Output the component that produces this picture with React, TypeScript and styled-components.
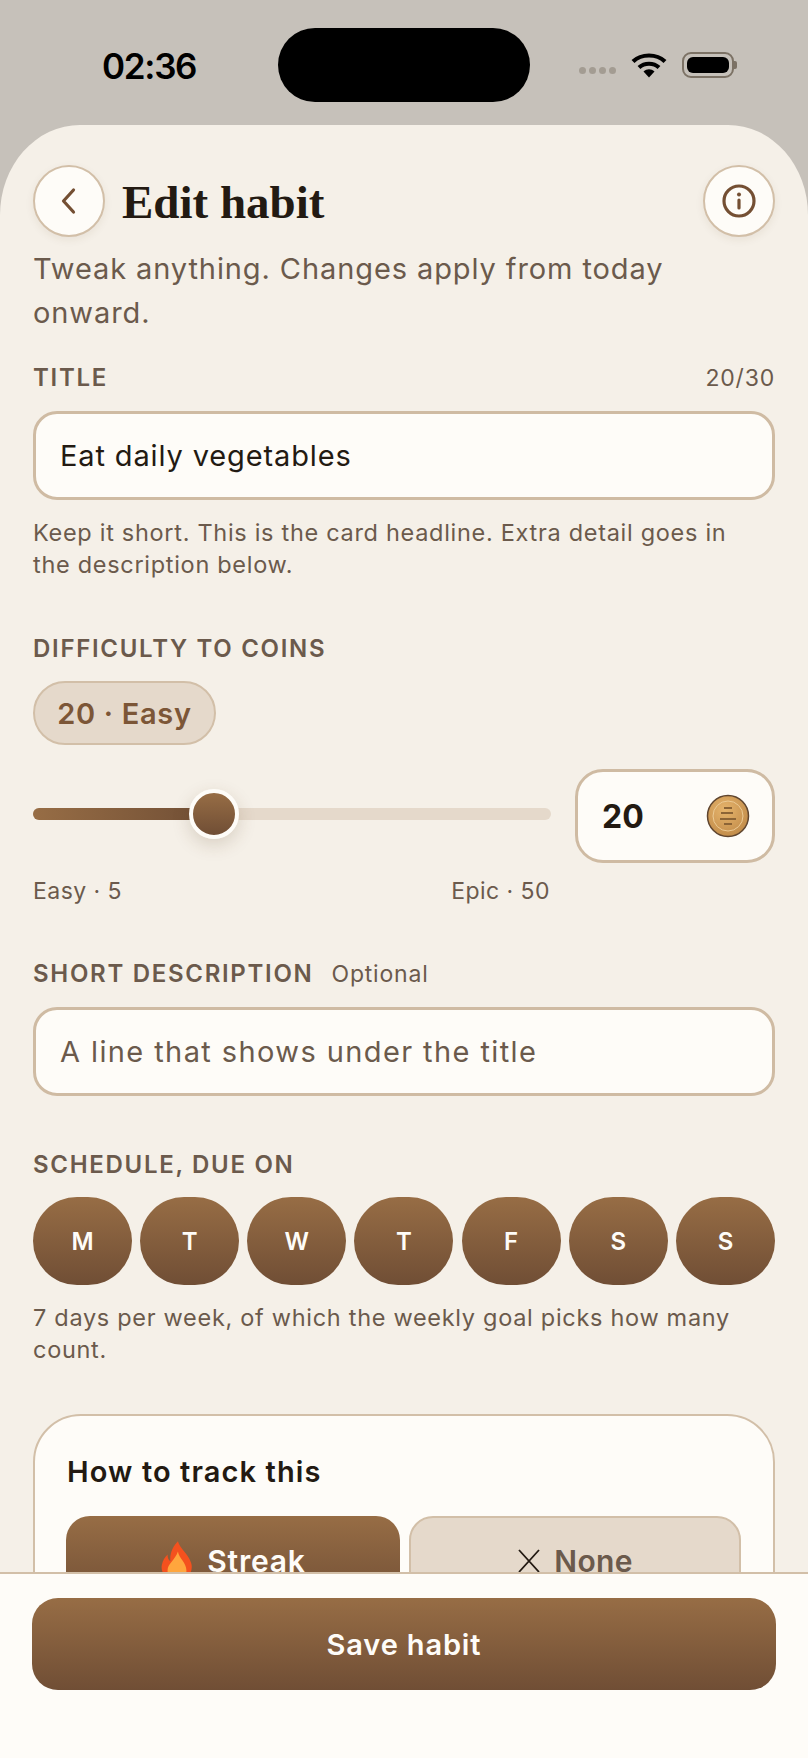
import React from 'react';
import styled, {createGlobalStyle} from 'styled-components';

const days = ['M', 'T', 'W', 'T', 'F', 'S', 'S'];

export default function App() {
    return (
        <>
            <GlobalStyle/>
            <Phone>
                <StatusBar>
                    <Time>02:36</Time>
                    <Island/>
                    <StatusIcons>
                        <SignalDots>
                            <SignalDot/><SignalDot/><SignalDot/><SignalDot/>
                        </SignalDots>
                        <svg width="36" height="26" viewBox="0 0 36 26">
                            <path d="M2 9.5C10.500 1.500 25.500 1.500 34 9.500" fill="none" stroke="#000" strokeWidth="4.200"/>
                            <path d="M8 15.500C13.500 10.500 22.500 10.500 28 15.500" fill="none" stroke="#000" strokeWidth="4.200"/>
                            <path d="M12.500 19.500L18 25.500L23.500 19.500C20 16.500 16 16.500 12.500 19.500Z" fill="#000"/>
                        </svg>
                        <Battery>
                            <BatteryFill/>
                        </Battery>
                        <BatteryCap/>
                    </StatusIcons>
                </StatusBar>

                <Sheet>
                    <Header>
                        <RoundButton>
                            <svg width="24" height="30" viewBox="0 0 24 30" fill="none">
                                <path d="M16.500 4L6.500 15L16.500 26" stroke="#744f33" strokeWidth="3.200" strokeLinecap="round" strokeLinejoin="round"/>
                            </svg>
                        </RoundButton>
                        <Title>Edit habit</Title>
                        <InfoButton>
                            <svg width="36" height="36" viewBox="0 0 36 36" fill="none">
                                <circle cx="18" cy="18" r="15" stroke="#744f33" strokeWidth="3.200"/>
                                <path d="M18 17V25" stroke="#744f33" strokeWidth="3.200" strokeLinecap="round"/>
                                <circle cx="18" cy="11.500" r="2" fill="#744f33"/>
                            </svg>
                        </InfoButton>
                    </Header>

                    <Subtitle>Tweak anything. Changes apply from today onward.</Subtitle>

                    <LabelRow>
                        <Label>TITLE</Label>
                        <Counter>20/30</Counter>
                    </LabelRow>
                    <Field>Eat daily vegetables</Field>
                    <Hint>Keep it short. This is the card headline. Extra detail goes in the description below.</Hint>

                    <SectionLabel>DIFFICULTY TO COINS</SectionLabel>
                    <Pill>20 · Easy</Pill>
                    <SliderRow>
                        <SliderColumn>
                            <Track>
                                <TrackFill/>
                                <Thumb/>
                            </Track>
                        </SliderColumn>
                        <CoinBox>
                            <CoinValue>20</CoinValue>
                            <svg width="44" height="44" viewBox="0 0 44 44">
                                <defs>
                                    <radialGradient id="coin" cx="42%" cy="35%" r="70%">
                                        <stop offset="0%" stopColor="#e6b46c"/>
                                        <stop offset="100%" stopColor="#c08a48"/>
                                    </radialGradient>
                                </defs>
                                <circle cx="22" cy="22" r="20.500" fill="url(#coin)" stroke="#5f452f" strokeWidth="1.500"/>
                                <circle cx="22" cy="22" r="15" fill="none" stroke="#ecca94" strokeWidth="1"/>
                                <path d="M18 14H26M15 19H27M14 25H30M18 30H26" stroke="#8c6436" strokeWidth="1.800"/>
                            </svg>
                        </CoinBox>
                    </SliderRow>
                    <ScaleRow>
                        <span>Easy · 5</span>
                        <span>Epic · 50</span>
                    </ScaleRow>

                    <OptionalRow>
                        <Label>SHORT DESCRIPTION</Label>
                        <Counter>Optional</Counter>
                    </OptionalRow>
                    <Field $placeholder>A line that shows under the title</Field>

                    <SectionLabel $gap={54}>SCHEDULE, DUE ON</SectionLabel>
                    <Days>
                        {days.map((day, i) => <Day key={i}>{day}</Day>)}
                    </Days>
                    <Hint>7 days per week, of which the weekly goal picks how many count.</Hint>

                    <TrackCard>
                        <CardTitle>How to track this</CardTitle>
                        <TrackOptions>
                            <TrackOption $active>
                                <svg width="34" height="44" viewBox="0 0 36 44">
                                    <path d="M19 1C21 9 30 14 33 24C36 34 28 43 18 43C8 43 0 35 2 26C3 21 5 18 8 15C8 19 9 21 11 22C10 14 14 6 19 1Z" fill="#f4511e"/>
                                    <path d="M19 12C20 19 28 24 28 32C28 38 23 43 18 43C12 43 8 38 8 32C8 25 16 21 19 12Z" fill="#ffa63d"/>
                                </svg>
                                Streak
                            </TrackOption>
                            <TrackOption>
                                <svg width="24" height="26" viewBox="0 0 24 26" fill="none">
                                    <path d="M2 2L22 24M22 2L2 24" stroke="#231a12" strokeWidth="1.800"/>
                                </svg>
                                None
                            </TrackOption>
                        </TrackOptions>
                    </TrackCard>
                </Sheet>

                <Footer>
                    <SaveButton>Save habit</SaveButton>
                </Footer>
            </Phone>
        </>
    );
}

const GlobalStyle = createGlobalStyle`
    html, body {
        margin: 0;
        padding: 0;
        background: #c6c1ba;
    }

    * {
        box-sizing: border-box;
    }
`;

const Phone = styled.div`
    width: 808px;
    height: 1758px;
    display: flex;
    flex-direction: column;
    overflow: hidden;
    background: #c6c1ba;
    font-family: Inter, "Liberation Sans", sans-serif;
    color: #231a12;
`;

const StatusBar = styled.div`
    height: 125px;
    flex-shrink: 0;
    display: flex;
    padding: 28px 0 0 102px;
    align-items: flex-start;
`;

const Time = styled.div`
    width: 176px;
    flex-shrink: 0;
    margin-top: 18px;
    font-size: 35px;
    line-height: 40px;
    font-weight: 600;
    letter-spacing: -1.300px;
    color: #000;
`;

const Island = styled.div`
    width: 252px;
    height: 74px;
    flex-shrink: 0;
    border-radius: 37px;
    background: #000;
`;

const StatusIcons = styled.div`
    display: flex;
    align-items: center;
    margin-left: 49px;
    height: 74px;
`;

const SignalDots = styled.div`
    display: flex;
    gap: 3px;
    margin: 11px 15px 0 0;
`;

const SignalDot = styled.div`
    width: 7px;
    height: 7px;
    border-radius: 50%;
    background: #a39c92;
`;

const Battery = styled.div`
    width: 52px;
    height: 26px;
    margin-left: 15px;
    padding: 3px;
    border: 2px solid #7c7265;
    border-radius: 9px;
`;

const BatteryFill = styled.div`
    height: 100%;
    border-radius: 6px;
    background: #000;
`;

const BatteryCap = styled.div`
    width: 2.500px;
    height: 8px;
    border-radius: 0 2px 2px 0;
    background: #7c7265;
`;

const Sheet = styled.div`
    flex: 1;
    min-height: 0;
    overflow: hidden;
    padding: 40px 33px 0;
    background: #f5f0e8;
    border-radius: 80px 80px 0 0 / 90px 90px 0 0;
`;

const Header = styled.div`
    display: flex;
    align-items: center;
    gap: 17px;
`;

const RoundButton = styled.div`
    width: 72px;
    height: 72px;
    flex-shrink: 0;
    display: flex;
    align-items: center;
    justify-content: center;
    border-radius: 50%;
    background: #fefcf8;
    border: 2px solid #d2bfa8;
    box-shadow: 0 3px 8px rgba(90, 60, 30, 0.08);
`;

const InfoButton = styled(RoundButton)`
    margin-left: auto;
`;

const Title = styled.h1`
    margin: 2px 0 0;
    font-family: "Liberation Serif", serif;
    font-size: 47px;
    line-height: 54px;
    font-weight: 700;
    color: #231a12;
`;

const Subtitle = styled.p`
    margin: 10px 0 0;
    width: 660px;
    font-size: 29px;
    line-height: 44px;
    letter-spacing: 0.9px;
    color: #6b5a4c;
`;

const LabelRow = styled.div`
    display: flex;
    justify-content: space-between;
    align-items: center;
    margin-top: 26px;
    height: 34px;
`;

const OptionalRow = styled(LabelRow)`
    justify-content: flex-start;
    gap: 18px;
    margin-top: 51px;
`;

const Label = styled.div`
    font-size: 24px;
    line-height: 30px;
    font-weight: 600;
    letter-spacing: 1.7px;
    color: #6b5a4c;
`;

const SectionLabel = styled(Label)<{ $gap?: number }>`
    margin-top: ${({$gap}) => $gap ?? 53}px;
`;

const Counter = styled.div`
    font-size: 23px;
    line-height: 30px;
    letter-spacing: 0.8px;
    color: #6b5a4c;
`;

const Field = styled.div<{ $placeholder?: boolean }>`
    height: 89px;
    margin-top: 16px;
    padding: 0 24px;
    display: flex;
    align-items: center;
    font-size: 29px;
    letter-spacing: ${({$placeholder}) => ($placeholder ? 1.4 : 0.87)}px;
    background: #fefcf8;
    border: 3px solid #cfbba3;
    border-radius: 24px;
    color: ${({$placeholder}) => ($placeholder ? '#6b5a4c' : '#231a12')};
`;

const Hint = styled.p`
    margin: 17px 0 0;
    max-width: 705px;
    font-size: 23.500px;
    line-height: 32px;
    letter-spacing: 0.7px;
    color: #6b5a4c;
`;

const Pill = styled.div`
    width: 183px;
    height: 64px;
    margin-top: 17px;
    display: flex;
    align-items: center;
    justify-content: center;
    font-size: 29px;
    font-weight: 600;
    letter-spacing: 0.7px;
    color: #7c5637;
    background: #e5d9cb;
    border: 2px solid #d2bfa8;
    border-radius: 32px;
`;

const SliderRow = styled.div`
    display: flex;
    align-items: center;
    gap: 24px;
    margin-top: 24px;
`;

const SliderColumn = styled.div`
    flex: 1;
    padding-bottom: 4px;
`;

const Track = styled.div`
    position: relative;
    height: 12px;
    border-radius: 6px;
    background: #e5d9cb;
`;

const TrackFill = styled.div`
    width: 181px;
    height: 100%;
    border-radius: 6px 0 0 6px;
    background: linear-gradient(90deg, #976d45, #704e35);
`;

const Thumb = styled.div`
    position: absolute;
    top: -19px;
    left: 156px;
    width: 50px;
    height: 50px;
    border-radius: 50%;
    border: 4px solid #fefcf8;
    background: linear-gradient(180deg, #976d45, #704e35);
    box-shadow: 0 6px 18px rgba(90, 60, 30, 0.18);
`;

const CoinBox = styled.div`
    width: 200px;
    height: 94px;
    flex-shrink: 0;
    padding: 0 22px 0 24px;
    display: flex;
    align-items: center;
    justify-content: space-between;
    background: #fefcf8;
    border: 3px solid #cfbba3;
    border-radius: 28px;
`;

const CoinValue = styled.div`
    font-size: 32px;
    font-weight: 700;
    color: #231a12;
`;

const ScaleRow = styled.div`
    width: 517px;
    display: flex;
    justify-content: space-between;
    margin-top: 13px;
    font-size: 23px;
    line-height: 30px;
    letter-spacing: 0.45px;
    color: #6b5a4c;
`;

const Days = styled.div`
    display: flex;
    justify-content: space-between;
    margin-top: 17px;
`;

const Day = styled.div`
    width: 99px;
    height: 88px;
    display: flex;
    align-items: center;
    justify-content: center;
    border-radius: 44px;
    font-size: 24px;
    font-weight: 600;
    color: #fefcf8;
    background: linear-gradient(180deg, #976d45, #704e35);
`;

const TrackCard = styled.div`
    height: 300px;
    margin-top: 48px;
    padding: 37px 32px;
    background: #fefcf8;
    border: 2px solid #d2bfa8;
    border-radius: 48px;
`;

const CardTitle = styled.div`
    font-size: 29px;
    line-height: 38px;
    font-weight: 600;
    letter-spacing: 1.1px;
    color: #231a12;
`;

const TrackOptions = styled.div`
    display: grid;
    grid-template-columns: 334px 332px;
    gap: 9px;
    margin: 25px 0 0 -1px;
`;

const TrackOption = styled.div<{ $active?: boolean }>`
    height: 90px;
    display: flex;
    align-items: center;
    justify-content: center;
    gap: 13px;
    font-size: 30px;
    font-weight: 600;
    letter-spacing: ${({$active}) => ($active ? 0.8 : 0.3)}px;
    border-radius: 24px;
    color: ${({$active}) => ($active ? '#fefcf8' : '#6b5a4c')};
    background: ${({$active}) => ($active ? 'linear-gradient(180deg, #976d45, #704e35)' : '#e5d9cb')};
    border: ${({$active}) => ($active ? 'none' : '2px solid #d2bfa8')};
`;

const Footer = styled.div`
    height: 186px;
    flex-shrink: 0;
    padding: 24px 32px 0;
    background: #fefcf8;
    border-top: 2px solid #d2bfa8;
`;

const SaveButton = styled.div`
    height: 92px;
    display: flex;
    align-items: center;
    justify-content: center;
    font-size: 29px;
    font-weight: 600;
    letter-spacing: 0.85px;
    color: #fefcf8;
    border-radius: 26px;
    background: linear-gradient(180deg, #976d45, #704e35);
`;
